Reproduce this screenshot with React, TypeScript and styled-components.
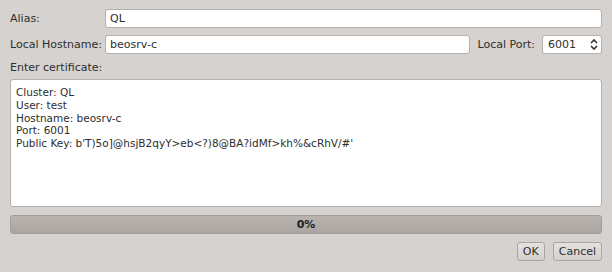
import React from "react";
import styled, { createGlobalStyle } from "styled-components";

const GlobalStyle = createGlobalStyle`
    html, body {
        margin: 0;
        padding: 0;
        background: #d6d2d0;
    }
    body {
        font-family: "DejaVu Sans", "Liberation Sans", sans-serif;
        font-size: 11px;
        color: #2e2e2e;
    }
`;

const Dialog = styled.div`
    width: 612px;
    height: 272px;
    box-sizing: border-box;
    padding: 9px 10px 0 10px;
    display: flex;
    flex-direction: column;
`;

const FormGrid = styled.div`
    display: grid;
    grid-template-columns: 95px 1fr;
    row-gap: 7px;
    align-items: center;
`;

const Label = styled.label`
    white-space: nowrap;
`;

const TextInput = styled.div`
    height: 19px;
    box-sizing: border-box;
    background: #fff;
    border: 1px solid #b4b0ac;
    border-radius: 3px;
    padding: 0 4px;
    display: flex;
    align-items: center;
    flex: 1;
`;

const HostRow = styled.div`
    display: flex;
    align-items: center;
`;

const PortLabel = styled.label`
    margin-left: 7px;
    margin-right: 7px;
    white-space: nowrap;
`;

const SpinBox = styled.div`
    width: 60px;
    height: 19px;
    box-sizing: border-box;
    background: #fff;
    border: 1px solid #b4b0ac;
    border-radius: 3px;
    padding: 0 3px 0 5px;
    display: flex;
    align-items: center;
    justify-content: space-between;
`;

const SectionLabel = styled.div`
    margin-top: 7px;
    height: 13px;
`;

const CertBox = styled.div`
    margin-top: 5px;
    height: 128px;
    box-sizing: border-box;
    background: #fff;
    border: 1px solid #b4b0ac;
    border-radius: 3px;
    padding: 6px 5px;
    font-size: 10.5px;
    line-height: 12.8px;
    white-space: pre;
`;

const Progress = styled.div`
    margin-top: 8px;
    height: 19px;
    box-sizing: border-box;
    border: 1px solid #a29e9a;
    border-radius: 3px;
    background: linear-gradient(#b9b4b0, #aaa5a1);
    display: flex;
    align-items: center;
    justify-content: center;
    font-weight: bold;
    color: #1e1e1e;
`;

const ButtonRow = styled.div`
    margin-top: 8px;
    display: flex;
    justify-content: flex-end;
    gap: 8px;
`;

const Button = styled.button`
    height: 19px;
    box-sizing: border-box;
    padding: 0 5px;
    font-family: inherit;
    font-size: 11px;
    color: #2e2e2e;
    background: linear-gradient(#e4e1df, #d4d0cd);
    border: 1px solid #a9a5a1;
    border-radius: 3px;
`;

const Arrows = () => (
    <svg width="8" height="11" viewBox="0 0 8 11">
        <path d="M1 4 L4 1 L7 4" fill="none" stroke="#2e2e2e" strokeWidth="1.6" />
        <path d="M1 7 L4 10 L7 7" fill="none" stroke="#2e2e2e" strokeWidth="1.6" />
    </svg>
);

const cert = [
    "Cluster: QL",
    "User: test",
    "Hostname: beosrv-c",
    "Port: 6001",
    "Public Key: b'T)5o]@hsjB2qyY>eb<?)8@BA?idMf>kh%&cRhV/#'",
].join("\n");

const App: React.FC = () => {
    return (
        <>
            <GlobalStyle />
            <Dialog>
                <FormGrid>
                    <Label>Alias:</Label>
                    <TextInput>QL</TextInput>
                    <Label>Local Hostname:</Label>
                    <HostRow>
                        <TextInput>beosrv-c</TextInput>
                        <PortLabel>Local Port:</PortLabel>
                        <SpinBox>
                            <span>6001</span>
                            <Arrows />
                        </SpinBox>
                    </HostRow>
                </FormGrid>
                <SectionLabel>Enter certificate:</SectionLabel>
                <CertBox>{cert}</CertBox>
                <Progress>0%</Progress>
                <ButtonRow>
                    <Button>OK</Button>
                    <Button>Cancel</Button>
                </ButtonRow>
            </Dialog>
        </>
    );
};

export default App;
